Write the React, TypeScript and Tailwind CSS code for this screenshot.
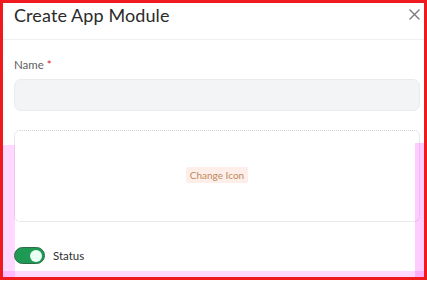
import React, { useState } from "react";

const font = { fontFamily: "Lato, 'Open Sans', sans-serif" };

const CloseIcon: React.FC = () => (
  <svg width="11" height="11" viewBox="0 0 11 11" fill="none">
    <path d="M1 1L10 10M10 1L1 10" stroke="#7a7a7a" strokeWidth="1.4" strokeLinecap="round" />
  </svg>
);

const App: React.FC = () => {
  const [enabled, setEnabled] = useState(true);
  const [name, setName] = useState("");

  return (
    <div
      className="relative w-[427px] h-[280px] border-[3px] border-[#ee1a1d] bg-white overflow-hidden"
      style={font}
    >
      {/* header */}
      <div className="flex items-center justify-between h-[37px] pb-[13px] pl-[11px] pr-[3px] border-b border-[#eef0f2]">
        <h2 className="text-[18px] leading-[22px] text-[#2b2b2b] tracking-[0.1px]">Create App Module</h2>
        <button className="w-[14px] h-[14px] flex items-center justify-center">
          <CloseIcon />
        </button>
      </div>

      {/* body */}
      <div className="pl-[11px] pr-[4px] pt-[17px]">
        <label className="block text-[11.5px] leading-[16px] text-[#5f5f5f] mb-[6px]">
          Name <span className="text-[#e0202a]">*</span>
        </label>
        <input
          value={name}
          onChange={(e) => setName(e.target.value)}
          className="block w-full h-[32px] rounded-[7px] bg-[#f3f4f6] border border-[#eaebee] outline-none px-3 text-sm"
        />

        <div className="mt-[19px] h-[92px] rounded-[6px] border border-dotted border-[#cfd2d6] flex items-center justify-center">
          <button className="h-[16px] px-[4px] bg-[#fdeeea] text-[#c0895c] text-[10px] leading-[16px] rounded-[2px] mb-[2px]">
            Change Icon
          </button>
        </div>

        <div className="mt-[25px] flex items-center gap-[8px]">
          <button
            onClick={() => setEnabled((prev) => !prev)}
            className="relative w-[31px] h-[17px] rounded-full bg-[#1f9a55] border border-[#2e6b47] flex items-center px-[2px] justify-end"
          >
            <span className="w-[12px] h-[12px] rounded-full bg-[#eafff4]" />
          </button>
          <span className="text-[11.5px] text-[#2f2f2f]">Status</span>
        </div>
      </div>

      {/* debug overlays */}
      <div className="absolute left-[-3px] top-[142px] w-[3px] h-[140px] bg-[#8a4a1e]" />
      <div className="absolute right-[-3px] top-[140px] w-[2px] h-[140px] bg-[#a6301c]" />
      <div className="absolute left-0 top-[142px] w-[12px] h-[132px] bg-[#ff00ff]/15" />
      <div className="absolute right-0 top-[140px] w-[9px] h-[134px] bg-[#ff00ff]/20" />
      <div className="absolute left-0 right-0 bottom-0 h-[6px] bg-[#ff00ff]/15" />
      <div className="absolute left-[-3px] right-[-3px] bottom-[-2px] h-[1px] bg-[#8a3a1c]" />
    </div>
  );
};

export default App;
